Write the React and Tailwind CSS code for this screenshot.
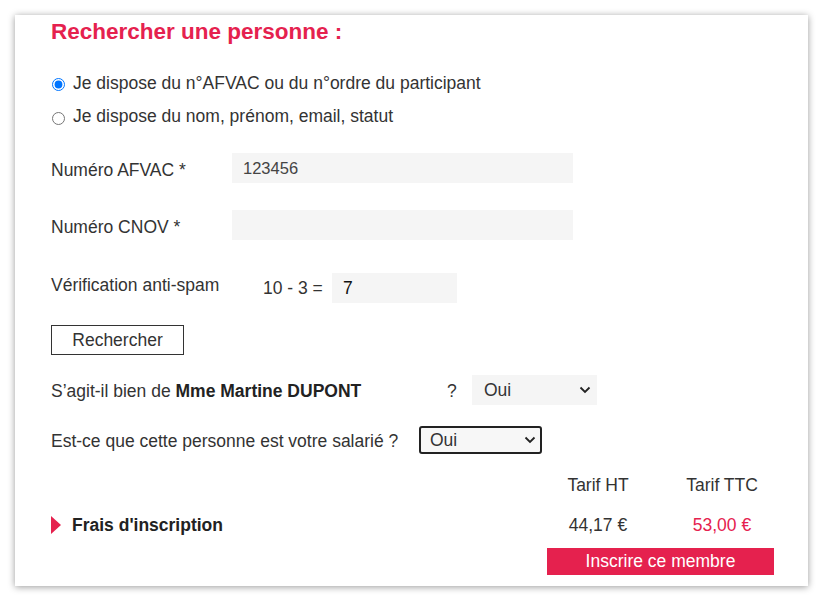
import React from "react";

function Chevron() {
  return (
    <svg width="12" height="8" viewBox="0 0 12 8" className="shrink-0">
      <path d="M1.5 1.5 L6 6 L10.5 1.5" fill="none" stroke="#222" strokeWidth="1.8" />
    </svg>
  );
}

export default function App() {
  return (
    <div className="w-[823px] h-[601px] bg-white pt-[15px] pl-[15px] font-['Liberation_Sans',Arial,sans-serif] text-[17.5px] text-[#333]">
      <div className="w-[793px] h-[571px] bg-white shadow-[0_1px_7px_rgba(0,0,0,0.4)] pl-[36px] pr-[24px] pt-[4px] flex flex-col">
        <h1 className="text-[22.5px] leading-[26px] font-bold text-[#e5214e]">Rechercher une personne :</h1>

        <label className="mt-[26px] h-[24px] flex items-center">
          <input type="radio" name="mode" defaultChecked className="w-[13px] h-[13px] ml-[1px] mr-[8px] mt-[2px] accent-[#0075ff]" />
          Je dispose du n°AFVAC ou du n°ordre du participant
        </label>
        <label className="mt-[9px] h-[24px] flex items-center">
          <input type="radio" name="mode" className="w-[13px] h-[13px] ml-[1px] mr-[8px] mt-[4px]" />
          Je dispose du nom, prénom, email, statut
        </label>

        <div className="mt-[25px] h-[30px] flex items-center">
          <span className="w-[181px] pt-[4px]">Numéro AFVAC *</span>
          <div className="w-[341px] h-[30px] bg-[#f5f5f5] pl-[11px] flex items-center text-[16.5px] text-[#444]">123456</div>
        </div>

        <div className="mt-[27px] h-[30px] flex items-center">
          <span className="w-[181px] pt-[4px]">Numéro CNOV *</span>
          <div className="w-[341px] h-[30px] bg-[#f5f5f5]"></div>
        </div>

        <div className="mt-[33px] h-[30px] flex items-center">
          <span className="w-[212px] -mt-[5px]">Vérification anti-spam</span>
          <span className="w-[69px]">10 - 3 =</span>
          <div className="w-[125px] h-[30px] bg-[#f5f5f5] pl-[11px] flex items-center text-[#111]">7</div>
        </div>

        <button className="mt-[22px] w-[133px] h-[30px] border border-[#333] bg-white text-[17.5px] text-[#333] flex items-center justify-center">
          Rechercher
        </button>

        <div className="mt-[20px] h-[30px] flex items-center">
          <span className="w-[396px] pt-[2px]">
            S’agit-il bien de <b className="text-[#222]">Mme Martine DUPONT</b>
          </span>
          <span className="w-[25px] pt-[2px]">?</span>
          <div className="w-[125px] h-[30px] bg-[#f5f5f5] pl-[12px] pr-[6px] flex items-center justify-between text-[#333]">
            <span>Oui</span>
            <Chevron />
          </div>
        </div>

        <div className="mt-[21px] h-[28px] flex items-center">
          <span className="w-[368px] pt-[2px]">Est-ce que cette personne est votre salarié ?</span>
          <div className="w-[123px] h-[28px] border-2 border-[#222] rounded-[3px] bg-[#f7f7f7] pl-[9px] pr-[4px] flex items-center justify-between text-[#333]">
            <span>Oui</span>
            <Chevron />
          </div>
        </div>

        <div className="mt-[20px] h-[22px] flex items-center">
          <div className="flex-1"></div>
          <span className="w-[124px] text-center">Tarif HT</span>
          <span className="w-[124px] text-center">Tarif TTC</span>
        </div>

        <div className="mt-[18px] h-[22px] flex items-center">
          <div className="flex-1 flex items-center">
            <svg width="10" height="18" viewBox="0 0 10 18" className="mr-[11px]">
              <polygon points="0,0 10,9 0,18" fill="#e5214e" />
            </svg>
            <span className="font-bold text-[#222]">Frais d'inscription</span>
          </div>
          <span className="w-[124px] text-center">44,17 €</span>
          <span className="w-[124px] text-center text-[#e5214e]">53,00 €</span>
        </div>

        <button className="mt-[12px] ml-[496px] w-[227px] h-[27px] bg-[#e5214e] text-white text-[17.5px] flex items-center justify-center">
          Inscrire ce membre
        </button>
      </div>
    </div>
  );
}
